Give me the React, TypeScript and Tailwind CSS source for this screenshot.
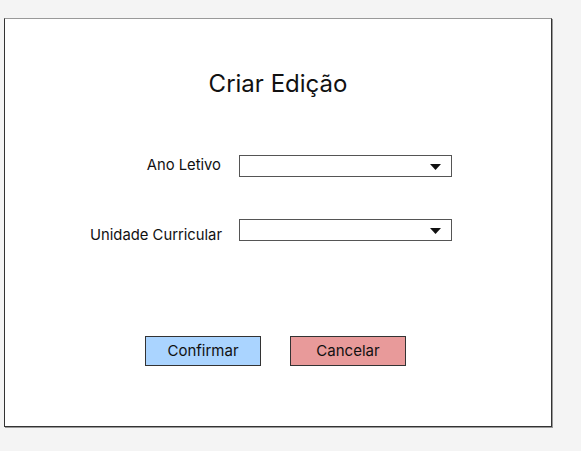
import React from "react";

function Arrow() {
  return (
    <svg width="11" height="6" viewBox="0 0 11 6" className="block">
      <polygon points="0,0 11,0 5.5,6" fill="#111" />
    </svg>
  );
}

function SelectBox() {
  return (
    <div className="w-[213px] h-[22px] border border-[#555] bg-white flex items-center justify-end pr-[10px] pt-[2px]">
      <Arrow />
    </div>
  );
}

export default function App() {
  return (
    <div
      className="w-[581px] h-[451px] bg-[#f4f4f4] pt-[18px] pl-[4px]"
      style={{ fontFamily: "Inter, 'Liberation Sans', sans-serif" }}
    >
      <div className="w-[548px] h-[409px] bg-white border border-[#333] border-t-[#999] shadow-[1px_1px_0_#999] flex flex-col">
        <h1 className="mt-[49px] text-center text-[24px] leading-[32px] text-[#111]">Criar Edição</h1>
        <div className="mt-[55px] flex items-center">
          <div className="w-[216px] text-right text-[14.8px] text-[#111] -translate-y-[1px]">Ano Letivo</div>
          <div className="ml-[18px]">
            <SelectBox />
          </div>
        </div>
        <div className="mt-[42px] flex items-center">
          <div className="w-[217px] text-right text-[14.8px] text-[#111] translate-y-[5px]">Unidade Curricular</div>
          <div className="ml-[17px]">
            <SelectBox />
          </div>
        </div>
        <div className="mt-[95px] flex ml-[140px] gap-[29px]">
          <div className="w-[116px] h-[30px] bg-[#aad4ff] border border-[#333] flex items-center justify-center text-[15px] text-[#111]">
            Confirmar
          </div>
          <div className="w-[116px] h-[30px] bg-[#e89a9a] border border-[#333] flex items-center justify-center text-[15px] text-[#111]">
            Cancelar
          </div>
        </div>
      </div>
    </div>
  );
}
